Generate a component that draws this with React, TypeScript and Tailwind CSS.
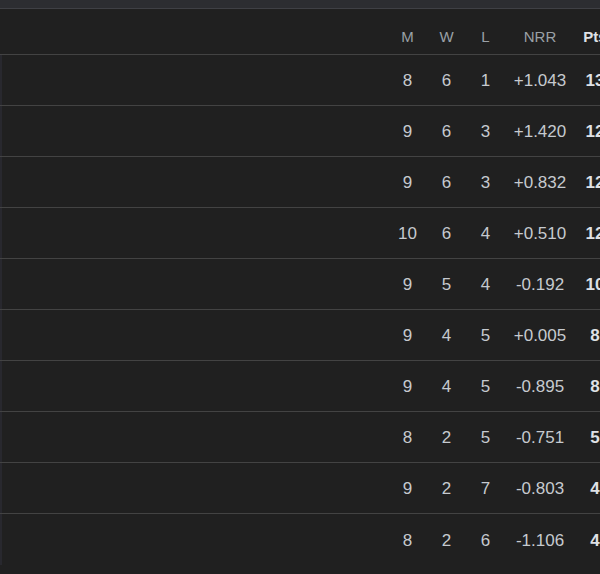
import React from 'react';

type Row = { m: number; w: number; l: number; nrr: string; pts: number };

const rows: Row[] = [
  { m: 8, w: 6, l: 1, nrr: '+1.043', pts: 13 },
  { m: 9, w: 6, l: 3, nrr: '+1.420', pts: 12 },
  { m: 9, w: 6, l: 3, nrr: '+0.832', pts: 12 },
  { m: 10, w: 6, l: 4, nrr: '+0.510', pts: 12 },
  { m: 9, w: 5, l: 4, nrr: '-0.192', pts: 10 },
  { m: 9, w: 4, l: 5, nrr: '+0.005', pts: 8 },
  { m: 9, w: 4, l: 5, nrr: '-0.895', pts: 8 },
  { m: 8, w: 2, l: 5, nrr: '-0.751', pts: 5 },
  { m: 9, w: 2, l: 7, nrr: '-0.803', pts: 4 },
  { m: 8, w: 2, l: 6, nrr: '-1.106', pts: 4 },
];

export default function App() {
  return (
    <div className="w-[600px] h-[574px] overflow-hidden bg-[#202020] font-['Liberation_Sans',Arial,sans-serif]">
      {/* top strip */}
      <div className="h-[8px] bg-[#2c2d31]" />
      <div className="h-px bg-[#3f4045]" />

      <div className="w-[620px]">
        {/* header */}
        <div className="flex h-[46px] items-end pb-[6px] border-b border-[#434343] text-[15px] text-[#9aa0a6]">
          <div className="w-[388px] shrink-0" />
          <div className="w-[39px] text-center">M</div>
          <div className="w-[39px] text-center">W</div>
          <div className="w-[39px] text-center">L</div>
          <div className="w-[70px] text-center">NRR</div>
          <div className="w-[40px] text-center font-bold text-[#dfe1e5]">Pts</div>
        </div>

        {rows.map((r, i) => (
          <div
            key={i}
            className={`flex h-[51px] items-center pt-[2px] text-[17px] text-[#c6cacf] ${
              i < rows.length - 1 ? 'border-b border-[#434343]' : ''
            }`}
          >
            <div className="w-[388px] shrink-0 self-stretch flex -mt-[2px]">
              <div className="w-[2px] bg-[#28282e]" />
            </div>
            <div className="w-[39px] text-center">{r.m}</div>
            <div className="w-[39px] text-center">{r.w}</div>
            <div className="w-[39px] text-center">{r.l}</div>
            <div className="w-[70px] text-center">{r.nrr}</div>
            <div className="w-[40px] text-center font-bold text-[#dfe1e5]">{r.pts}</div>
          </div>
        ))}
      </div>
    </div>
  );
}
